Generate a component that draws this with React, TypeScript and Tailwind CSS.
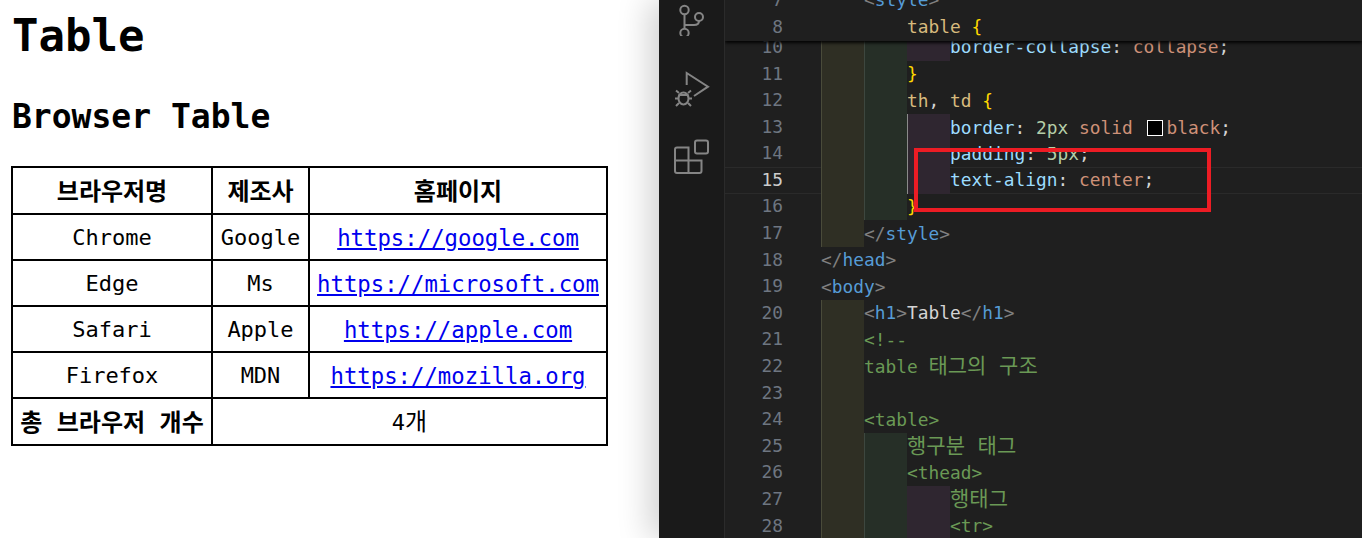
import React from 'react';

const mono = 'font-["DejaVu_Sans_Mono","Noto_Sans_CJK_KR",monospace]';

const browsers = [
  { name: 'Chrome', maker: 'Google', url: 'https://google.com' },
  { name: 'Edge', maker: 'Ms', url: 'https://microsoft.com' },
  { name: 'Safari', maker: 'Apple', url: 'https://apple.com' },
  { name: 'Firefox', maker: 'MDN', url: 'https://mozilla.org' },
];

const P = ({ children }: { children: React.ReactNode }) => <span className="text-[#808080]">{children}</span>;
const Tag = ({ children }: { children: React.ReactNode }) => <span className="text-[#569cd6]">{children}</span>;
const Sel = ({ children }: { children: React.ReactNode }) => <span className="text-[#d7ba7d]">{children}</span>;
const Prop = ({ children }: { children: React.ReactNode }) => <span className="text-[#9cdcfe]">{children}</span>;
const Val = ({ children }: { children: React.ReactNode }) => <span className="text-[#ce9178]">{children}</span>;
const Num = ({ children }: { children: React.ReactNode }) => <span className="text-[#b5cea8]">{children}</span>;
const Brace = ({ children }: { children: React.ReactNode }) => <span className="text-[#ffd700]">{children}</span>;
const Note = ({ children }: { children: React.ReactNode }) => <span className="text-[#6a9955]">{children}</span>;
const Kr = ({ children }: { children: React.ReactNode }) => <span className="text-[21px]">{children}</span>;

type Line = { n: number; depth: number; active?: boolean; guide?: boolean; code: React.ReactNode };

const lines: Line[] = [
  { n: 10, depth: 3, code: <><Prop>border-collapse</Prop>: <Val>collapse</Val>;</> },
  { n: 11, depth: 2, code: <Brace>{'}'}</Brace> },
  { n: 12, depth: 2, code: <><Sel>th</Sel>, <Sel>td</Sel> <Brace>{'{'}</Brace></> },
  {
    n: 13,
    depth: 3,
    guide: true,
    code: (
      <>
        <Prop>border</Prop>: <Num>2px</Num> <Val>solid</Val>{' '}
        <span className="ml-[4px] mr-[3px] inline-block h-[16px] w-[16px] translate-y-[2px] border border-white bg-black" />
        <Val>black</Val>;
      </>
    ),
  },
  { n: 14, depth: 3, guide: true, code: <><Prop>padding</Prop>: <Num>5px</Num>;</> },
  { n: 15, depth: 3, guide: true, active: true, code: <><Prop>text-align</Prop>: <Val>center</Val>;</> },
  { n: 16, depth: 2, code: <Brace>{'}'}</Brace> },
  { n: 17, depth: 1, code: <><P>&lt;/</P><Tag>style</Tag><P>&gt;</P></> },
  { n: 18, depth: 0, code: <><P>&lt;/</P><Tag>head</Tag><P>&gt;</P></> },
  { n: 19, depth: 0, code: <><P>&lt;</P><Tag>body</Tag><P>&gt;</P></> },
  { n: 20, depth: 1, code: <><P>&lt;</P><Tag>h1</Tag><P>&gt;</P><span className="text-[#d4d4d4]">Table</span><P>&lt;/</P><Tag>h1</Tag><P>&gt;</P></> },
  { n: 21, depth: 1, code: <Note>&lt;!--</Note> },
  { n: 22, depth: 1, code: <Note>table <Kr>태그의 구조</Kr></Note> },
  { n: 23, depth: 1, code: '' },
  { n: 24, depth: 1, code: <Note>&lt;table&gt;</Note> },
  { n: 25, depth: 2, code: <Note><Kr>행구분 태그</Kr></Note> },
  { n: 26, depth: 2, code: <Note>&lt;thead&gt;</Note> },
  { n: 27, depth: 3, code: <Note><Kr>행태그</Kr></Note> },
  { n: 28, depth: 3, code: <Note>&lt;tr&gt;</Note> },
];

const Indents = ({ depth, guide }: { depth: number; guide?: boolean }) => (
  <>
    {depth > 0 && <span className="h-full w-[43px] shrink-0 border-l border-[#4a4b3a] bg-[#2f2f24]" />}
    {depth > 1 && <span className="h-full w-[43px] shrink-0 border-l border-[#3d473f] bg-[#262f27]" />}
    {depth > 2 && (
      <span className={`h-full w-[43px] shrink-0 border-l bg-[#2f2630] ${guide ? 'border-[#8a8a8a]' : 'border-[#2f2630]'}`} />
    )}
  </>
);

const SourceControlIcon = () => (
  <svg width="36" height="36" viewBox="0 0 36 36" fill="none" stroke="#858585" strokeWidth="2">
    <circle cx="10.5" cy="10" r="4.2" />
    <circle cx="25" cy="17" r="4" />
    <circle cx="10.5" cy="33" r="4.2" />
    <path d="M10.5 14.5V28.5M10.5 25H20Q25 25 25 21" />
  </svg>
);

const DebugIcon = () => (
  <svg width="36" height="38" viewBox="0 0 36 38" fill="none" stroke="#858585" strokeWidth="2">
    <path d="M12.7 15V3L34 16.7L20 26" />
    <ellipse cx="9.5" cy="28.5" rx="5" ry="6" />
    <path d="M5 23L2 20.5M14 23L17 20.5M4.500 28.500H1M14.500 28.500H18M5 33L2 36M14 33L17 36M4.500 25H14.500" />
  </svg>
);

const ExtensionsIcon = () => (
  <svg width="36" height="36" viewBox="0 0 36 36" fill="none" stroke="#858585" strokeWidth="2">
    <rect x="21" y="1.500" width="13" height="13" rx="2" />
    <path d="M14.500 8.500H3A2 2 0 0 0 1 10.500V32A2 2 0 0 0 3 34H25.500A2 2 0 0 0 27.500 32V21.500H14.500V8.500ZM1 21.500H14.500V34" />
  </svg>
);

const App = () => {
  const cell = 'border-2 border-black pt-[5px] pb-[3px] px-[5px] text-center align-middle';

  return (
    <div className={`flex h-[538px] w-[1362px] overflow-hidden bg-white ${mono}`}>
      <main className="w-[659px] shrink-0 pl-[11px] pt-[9px] text-black">
        <h1 className="pl-[1px] text-[44px] font-bold leading-[54px]">Table</h1>
        <h2 className="mt-[34px] pl-[1px] text-[33px] font-bold leading-[40px]">Browser Table</h2>
        <table className="mt-[29px] w-[595px] table-fixed border-collapse text-[22px] leading-[34px]">
          <colgroup>
            <col className="w-[200px]" />
            <col className="w-[97px]" />
            <col className="w-[298px]" />
          </colgroup>
          <thead>
            <tr className="h-[47px] text-[24px]">
              <th className={cell}>브라우저명</th>
              <th className={cell}>제조사</th>
              <th className={cell}>홈페이지</th>
            </tr>
          </thead>
          <tbody>
            {browsers.map((b) => (
              <tr key={b.name} className="h-[46px]">
                <td className={cell}>{b.name}</td>
                <td className={cell}>{b.maker}</td>
                <td className={`${cell} whitespace-nowrap`}>
                  <a href="#" className="text-[22.3px] text-[#0000ee] underline">{b.url}</a>
                </td>
              </tr>
            ))}
          </tbody>
          <tfoot>
            <tr className="h-[47px]">
              <th className={`${cell} whitespace-nowrap text-[24px]`}>총 브라우저 개수</th>
              <td className={cell} colSpan={2}>4<span className="text-[24px]">개</span></td>
            </tr>
          </tfoot>
        </table>
      </main>

      <div className="flex flex-1 bg-[#1f1f1f] shadow-[-10px_0_30px_rgba(0,0,0,0.18)]">
        <aside className="flex w-[66px] shrink-0 flex-col items-center border-r border-[#2b2b2b] bg-[#1a1a1a]">
          <SourceControlIcon />
          <div className="mt-[34px]"><DebugIcon /></div>
          <div className="mt-[31px]"><ExtensionsIcon /></div>
        </aside>

        <div className="relative flex-1 overflow-hidden text-[17.85px]">
          <div className="absolute inset-x-0 top-0 z-10 h-[41px] overflow-hidden bg-[#1f1f1f] pl-[2px] shadow-[0_2px_3px_rgba(0,0,0,0.9)]">
            <div className="-mt-[13px]">
              <div className="flex h-[27px] items-center">
                <span className="w-[56px] text-right text-[#6e7681]">7</span>
                <span className="ml-[81px] whitespace-pre"><P>&lt;</P><Tag>style</Tag><P>&gt;</P></span>
              </div>
              <div className="flex h-[27px] items-center">
                <span className="w-[56px] text-right text-[#6e7681]">8</span>
                <span className="ml-[124px] whitespace-pre"><Sel>table</Sel> <Brace>{'{'}</Brace></span>
              </div>
            </div>
          </div>

          <div className="pt-[34px]">
            {lines.map((line) => (
              <div
                key={line.n}
                className={`flex h-[26.6px] items-center ${line.active ? 'shadow-[inset_0_1px_0_#2a2a2a,inset_0_-1px_0_#2a2a2a]' : ''}`}
              >
                <span className={`w-[58px] shrink-0 text-right ${line.active ? 'text-[#cccccc]' : 'text-[#6e7681]'}`}>{line.n}</span>
                <span className="w-[38px] shrink-0" />
                <Indents depth={line.depth} guide={line.guide} />
                <span className="whitespace-pre leading-none text-[#d4d4d4]">{line.code}</span>
              </div>
            ))}
          </div>

          <div className="absolute left-[189px] top-[148px] z-20 h-[64px] w-[297px] border-4 border-[#ed1c24]" />
        </div>
      </div>
    </div>
  );
};

export default App;
